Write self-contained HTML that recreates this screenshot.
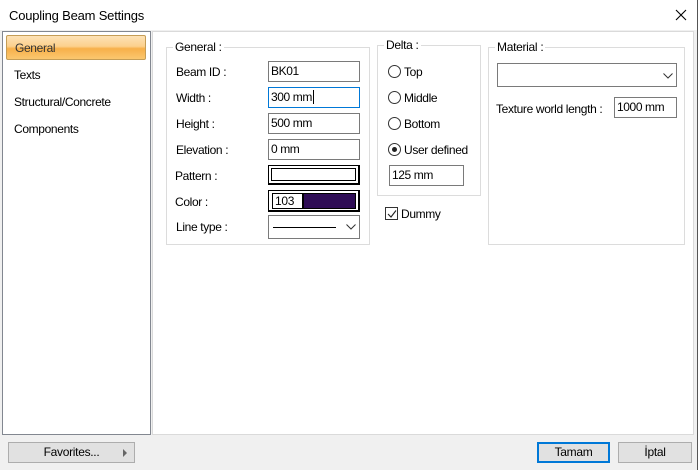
<!DOCTYPE html>
<html><head><style>
*{box-sizing:border-box;margin:0;padding:0}
body{width:698px;height:470px;background:#f0f0f0;font-family:"Liberation Sans",sans-serif;font-size:12px;color:#000;position:relative;overflow:hidden}
.a{position:absolute}
.title{left:0;top:0;width:698px;height:30px;background:#fff}
.inp{position:absolute;background:#fff;border:1px solid #7a7a7a;height:21px;padding:2px 0 0 2px;font-size:12px;letter-spacing:-0.4px}
.lbl{position:absolute;font-size:12px;letter-spacing:-0.35px}
.grp{position:absolute;border:1px solid #dcdcdc}
.gt{position:absolute;background:#fff;padding:0 2px;font-size:12px;top:-8px;left:6px;letter-spacing:-0.3px}
.rad{position:absolute;width:13px;height:13px;border:1px solid #333;border-radius:50%;background:#fff}
.btn{position:absolute;background:#e1e1e1;border:1px solid #adadad;height:21px;text-align:center;line-height:19px;font-size:12px;letter-spacing:-0.3px}
</style></head><body>
<div class="a title"></div>
<div class="a" style="left:9px;top:8px;font-size:13px;letter-spacing:-0.2px">Coupling Beam Settings</div>
<svg class="a" style="left:675px;top:9px" width="12" height="12"><path d="M1 1L11 11M11 1L1 11" stroke="#000" stroke-width="1.1"/></svg>
<div class="a" style="left:697px;top:0;width:1px;height:470px;background:#555"></div>

<div class="a" style="left:2px;top:31px;width:149px;height:404px;background:#fff;border:1px solid #828790"></div>
<div class="a" style="left:6px;top:35px;width:140px;height:25px;border:1px solid #c59d56;border-radius:2px;background:linear-gradient(#fde2b6 0%,#fcd08c 45%,#f7b04a 55%,#fbc76f 100%)"></div>
<div class="lbl" style="left:15px;top:41px;color:#333">General</div>
<div class="lbl" style="left:14px;top:68px">Texts</div>
<div class="lbl" style="left:14px;top:95px">Structural/Concrete</div>
<div class="lbl" style="left:14px;top:122px">Components</div>

<div class="a" style="left:152px;top:31px;width:542px;height:404px;background:#fff;border:1px solid #dadada"></div>

<div class="grp" style="left:166px;top:47px;width:204px;height:198px"><span class="gt">General :</span></div>
<div class="lbl" style="left:176px;top:65px">Beam ID :</div>
<div class="lbl" style="left:176px;top:91px">Width :</div>
<div class="lbl" style="left:176px;top:117px">Height :</div>
<div class="lbl" style="left:176px;top:143px">Elevation :</div>
<div class="lbl" style="left:175px;top:169px">Pattern :</div>
<div class="lbl" style="left:175px;top:195px">Color :</div>
<div class="lbl" style="left:176px;top:220px">Line type :</div>
<div class="inp" style="left:268px;top:61px;width:92px">BK01</div>
<div class="inp" style="left:268px;top:87px;width:92px;border-color:#0078d7">300 mm<span style="border-left:1px solid #000;margin-left:1px"></span></div>
<div class="inp" style="left:268px;top:113px;width:92px">500 mm</div>
<div class="inp" style="left:268px;top:139px;width:92px">0 mm</div>
<div class="a" style="left:268px;top:165px;width:92px;height:20px;border:1px solid #000;border-right-width:2px;border-bottom-width:2px;background:#fff"><div style="margin:2px;height:13px;border:1px solid #000"></div></div>
<div class="a" style="left:268px;top:190px;width:92px;height:22px;border:1px solid #000;border-right-width:2px;border-bottom-width:2px;background:#fff;padding:2px">
<div style="position:absolute;left:3px;top:2px;width:31px;height:16px;border:1px solid #000;font-size:12px;padding-left:2px;letter-spacing:-0.3px">103</div>
<div style="position:absolute;left:34px;top:2px;width:53px;height:16px;background:#2e0c55;border:1px solid #000"></div></div>
<div class="inp" style="left:268px;top:215px;width:92px;height:24px"><div style="position:absolute;left:4px;top:11px;width:63px;border-top:1px solid #000"></div><svg style="position:absolute;left:77px;top:8px" width="10" height="6"><path d="M0.5 0.5L5 5L9.5 0.5" fill="none" stroke="#333"/></svg></div>

<div class="grp" style="left:377px;top:45px;width:104px;height:151px"><span class="gt">Delta :</span></div>
<div class="rad" style="left:388px;top:65px"></div><div class="lbl" style="left:404px;top:65px">Top</div>
<div class="rad" style="left:388px;top:91px"></div><div class="lbl" style="left:404px;top:91px">Middle</div>
<div class="rad" style="left:388px;top:117px"></div><div class="lbl" style="left:404px;top:117px">Bottom</div>
<div class="rad" style="left:388px;top:143px"><div style="position:absolute;left:3px;top:3px;width:5px;height:5px;border-radius:50%;background:#222"></div></div><div class="lbl" style="left:404px;top:143px">User defined</div>
<div class="inp" style="left:389px;top:165px;width:75px">125 mm</div>
<div class="a" style="left:385px;top:207px;width:13px;height:13px;border:1px solid #333;background:#fff"><svg style="position:absolute;left:1px;top:1px" width="10" height="10"><path d="M1 5L4 8L9 1.5" fill="none" stroke="#222" stroke-width="1.1"/></svg></div>
<div class="lbl" style="left:401px;top:207px">Dummy</div>

<div class="grp" style="left:488px;top:47px;width:197px;height:198px"><span class="gt">Material :</span></div>
<div class="inp" style="left:497px;top:63px;width:180px;height:24px"><svg style="position:absolute;left:165px;top:9px" width="10" height="6"><path d="M0.5 0.5L5 5L9.5 0.5" fill="none" stroke="#333"/></svg></div>
<div class="lbl" style="left:496px;top:102px">Texture world length :</div>
<div class="inp" style="left:614px;top:97px;width:63px;height:21px">1000 mm</div>

<div class="btn" style="left:8px;top:442px;width:127px">Favorites...<svg style="position:absolute;left:114px;top:6px" width="5" height="8"><path d="M0 0L4 4L0 8Z" fill="#666"/></svg></div>
<div class="btn" style="left:537px;top:442px;width:73px;border:2px solid #0078d7;line-height:17px">Tamam</div>
<div class="btn" style="left:618px;top:442px;width:74px">İptal</div>
</body></html>
